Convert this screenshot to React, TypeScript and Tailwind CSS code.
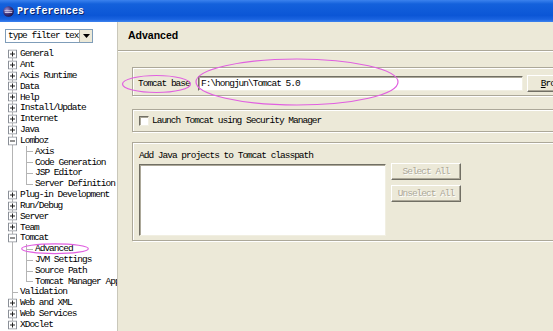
import React from 'react';

type Node = { label: string; open?: boolean; leaf?: boolean; children?: string[] };

const tree: Node[] = [
  { label: 'General' },
  { label: 'Ant' },
  { label: 'Axis Runtime' },
  { label: 'Data' },
  { label: 'Help' },
  { label: 'Install/Update' },
  { label: 'Internet' },
  { label: 'Java' },
  { label: 'Lomboz', open: true, children: ['Axis', 'Code Generation', 'JSP Editor', 'Server Definition'] },
  { label: 'Plug-in Development' },
  { label: 'Run/Debug' },
  { label: 'Server' },
  { label: 'Team' },
  { label: 'Tomcat', open: true, children: ['Advanced', 'JVM Settings', 'Source Path', 'Tomcat Manager App'] },
  { label: 'Validation', leaf: true },
  { label: 'Web and XML' },
  { label: 'Web Services' },
  { label: 'XDoclet' },
];

const mono = "font-['SimSun','Liberation_Mono','DejaVu_Sans_Mono',monospace]";
const txt = 'text-[9.5px] tracking-[-1px] leading-none';

const Expander = ({ open }: { open?: boolean }) => (
  <svg width="9" height="9" viewBox="0 0 9 9" className="absolute left-[8px] top-1/2 -translate-y-1/2">
    <rect x="0.5" y="0.5" width="8" height="8" fill="#fff" stroke="#8a8f97" />
    <line x1="2" y1="4.5" x2="7" y2="4.5" stroke="#222" />
    {!open && <line x1="4.5" y1="2" x2="4.5" y2="7" stroke="#222" />}
  </svg>
);

// vertical connector for the root level; pos tells where the line starts/stops
const RootLine = ({ pos }: { pos: 'first' | 'mid' | 'last' }) => (
  <div
    className={`absolute left-[12px] w-px bg-[#b4b4b4] ${
      pos === 'first' ? 'top-1/2 bottom-0' : pos === 'last' ? 'top-0 h-1/2' : 'top-0 bottom-0'
    }`}
  />
);

const TreeView = () => {
  const rows: React.ReactNode[] = [];
  tree.forEach((n, i) => {
    const pos = i === 0 ? 'first' : i === tree.length - 1 ? 'last' : 'mid';
    rows.push(
      <div key={n.label} className="relative h-[10.84px] flex items-center">
        <RootLine pos={pos} />
        {n.leaf ? (
          <div className="absolute left-[12px] top-1/2 w-[6px] h-px bg-[#b4b4b4]" />
        ) : (
          <Expander open={n.open} />
        )}
        <span className={`pl-[20px] whitespace-nowrap ${txt}`}>{n.label}</span>
      </div>
    );
    n.children?.forEach((c, j) => {
      const last = j === n.children!.length - 1;
      rows.push(
        <div key={n.label + c} className="relative h-[10.84px] flex items-center">
          <RootLine pos="mid" />
          <div className={`absolute left-[26px] w-px bg-[#b4b4b4] top-0 ${last ? 'h-1/2' : 'bottom-0'}`} />
          <div className="absolute left-[26px] top-1/2 w-[7px] h-px bg-[#b4b4b4]" />
          <span className={`pl-[35px] whitespace-nowrap ${txt}`}>{c}</span>
        </div>
      );
    });
  });
  return <div className="mt-[5.6px] flex flex-col">{rows}</div>;
};

const XpButton = ({ children, disabled, w }: { children: React.ReactNode; disabled?: boolean; w: string }) => (
  <div
    className={`${w} h-[17px] shrink-0 flex items-center justify-center bg-[#ece9d8] border border-t-white border-l-white border-r-[#716f64] border-b-[#716f64] shadow-[inset_-1px_-1px_0_#aca899] ${txt} ${
      disabled ? 'text-[#aca899] [text-shadow:1px_1px_0_#fff]' : 'text-black'
    }`}
  >
    {children}
  </div>
);

const groupCls =
  'border border-[#aca899] shadow-[inset_1px_1px_0_#fff,1px_1px_0_#fff]';
const sunken =
  'bg-white border border-t-[#716f64] border-l-[#716f64] border-r-[#f1efe2] border-b-[#f1efe2] shadow-[inset_1px_1px_0_#aca899]';

export default function App() {
  return (
    <div className={`relative w-[553px] h-[331px] overflow-hidden flex flex-col bg-[#ece9d8] text-black ${mono}`}>
      {/* title bar */}
      <div className="h-[22px] shrink-0 flex items-center gap-[3px] pl-[3px] bg-[linear-gradient(180deg,#3b82ee_0%,#1461dc_18%,#0b56d6_70%,#1a63e0_88%,#3d83ef_100%)]">
        <svg width="11" height="11" viewBox="0 0 11 11">
          <defs>
            <radialGradient id="ec" cx="0.35" cy="0.35" r="0.7">
              <stop offset="0" stopColor="#9a8fd0" />
              <stop offset="0.6" stopColor="#3c2f7a" />
              <stop offset="1" stopColor="#1e1646" />
            </radialGradient>
          </defs>
          <circle cx="5.5" cy="5.5" r="5.3" fill="url(#ec)" />
          <rect x="1.5" y="4.4" width="8" height="0.8" fill="#e6e2f5" />
          <rect x="1.8" y="6.1" width="7.4" height="0.8" fill="#e6e2f5" />
        </svg>
        <span className="text-white font-bold text-[10px] tracking-[0.1px] [text-shadow:1px_1px_0_#0a246a]">Preferences</span>
      </div>

      <div className="flex flex-1 min-h-0">
        {/* left: filter + tree */}
        <div className="w-[118px] shrink-0 bg-white border-r border-[#c9c7ba] overflow-hidden flex flex-col">
          <div className="mt-[7px] ml-[5px] w-[88px] h-[14px] flex border border-[#7f9db9] bg-white">
            <div className={`flex-1 flex items-center pl-[2px] overflow-hidden whitespace-nowrap ${txt}`}>type filter text</div>
            <div className="w-[13px] h-full flex items-center justify-center bg-[#ece9d8] border-l border-t-white border-[#aca899]">
              <svg width="7" height="4" viewBox="0 0 7 4">
                <path d="M0 0h7L3.5 4z" fill="#000" />
              </svg>
            </div>
          </div>
          <TreeView />
        </div>

        {/* right: page */}
        <div className="w-[470px] shrink-0 flex flex-col bg-[#ece9d8]">
          <div className="h-[29px] shrink-0 flex items-center pl-[10px] border-b border-[#aca899] shadow-[0_1px_0_#fff]">
            <span className="font-['Liberation_Sans',Arial,sans-serif] font-bold text-[10.5px]">Advanced</span>
          </div>

          <div className="flex flex-col pl-[14px] pt-[16px]">
            <div className={`h-[29px] flex items-start pl-[5px] pt-[8px] overflow-hidden ${groupCls}`}>
              <div className={`w-[60px] shrink-0 h-[15px] flex items-center whitespace-nowrap ${txt}`}>Tomcat base</div>
              <div className={`w-[325px] shrink-0 h-[15px] flex items-center pl-[2px] whitespace-nowrap ${sunken} ${txt}`}>F:\hongjun\Tomcat 5.0</div>
              <div className="ml-[4px] -mt-[1px] shrink-0">
                <XpButton w="w-[70px]">
                  <span><span className="underline">B</span>rowse...</span>
                </XpButton>
              </div>
            </div>

            <div className={`mt-[13px] h-[23px] flex items-center pl-[6px] ${groupCls}`}>
              <div className={`w-[10px] h-[10px] ${sunken}`} />
              <span className={`ml-[3px] whitespace-nowrap ${txt}`}>Launch Tomcat using Security Manager</span>
            </div>

            <div className={`mt-[10px] h-[99px] flex flex-col pl-[6px] pt-[8px] ${groupCls}`}>
              <div className={`h-[10px] flex items-center whitespace-nowrap ${txt}`}>Add Java projects to Tomcat classpath</div>
              <div className="mt-[3px] flex items-start gap-[5px]">
                <div className={`w-[247px] h-[72px] ${sunken}`} />
                <div className="-mt-[1px] flex flex-col gap-[5px]">
                  <XpButton w="w-[70px]" disabled>Select All</XpButton>
                  <XpButton w="w-[70px]" disabled>Unselect All</XpButton>
                </div>
              </div>
            </div>
          </div>
        </div>
      </div>

      {/* pink annotation marks */}
      <svg className="absolute inset-0 pointer-events-none" width="553" height="331">
        <ellipse cx="156.5" cy="84" rx="34" ry="8.5" fill="none" stroke="#e060e0" strokeWidth="1.2" />
        <ellipse cx="297" cy="82" rx="101" ry="23" fill="none" stroke="#e060e0" strokeWidth="1.2" />
        <ellipse cx="55" cy="248.7" rx="33.3" ry="4.9" fill="none" stroke="#e060e0" strokeWidth="1.2" />
      </svg>
    </div>
  );
}
